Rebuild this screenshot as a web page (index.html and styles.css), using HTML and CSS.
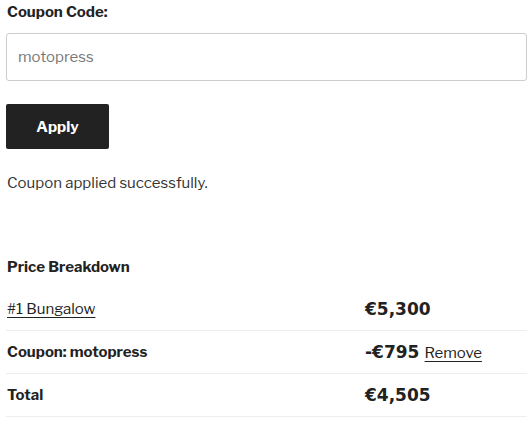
FILE: index.html
```html
<!DOCTYPE html>
<html>
<head>
<meta charset="utf-8">
<link rel="stylesheet" href="styles.css">
</head>
<body>
<div class="page">
  <label class="field-label" for="coupon">Coupon Code:</label>
  <input id="coupon" class="coupon-input" type="text" value="motopress">
  <button class="apply-btn" type="button">Apply</button>
  <p class="message">Coupon applied successfully.</p>
  <h3 class="breakdown-title">Price Breakdown</h3>
  <div class="breakdown">
    <div class="row">
      <div class="cell-label"><a href="#" class="link">#1 Bungalow</a></div>
      <div class="cell-price"><span class="price">€5,300</span></div>
    </div>
    <div class="row">
      <div class="cell-label"><strong>Coupon: motopress</strong></div>
      <div class="cell-price"><span class="price">-€795</span> <a href="#" class="link remove">Remove</a></div>
    </div>
    <div class="row">
      <div class="cell-label"><strong>Total</strong></div>
      <div class="cell-price"><span class="price">€4,505</span></div>
    </div>
  </div>
</div>
</body>
</html>
```

FILE: styles.css
```css
html, body {
  margin: 0;
  padding: 0;
  background: #fff;
}
body {
  font-family: "Libre Franklin", "Inter", "Liberation Sans", sans-serif;
  color: #222;
  font-size: 15px;
}
.page {
  width: 521px;
  margin-left: 6px;
  display: flex;
  flex-direction: column;
  align-items: flex-start;
}
.field-label {
  display: block;
  font-weight: 700;
  font-size: 15px;
  line-height: 24px;
  margin: 0 0 9px 1px;
}
.coupon-input {
  box-sizing: border-box;
  width: 521px;
  height: 48px;
  border: 1px solid #ccc;
  border-radius: 3px;
  padding: 0 11px;
  font-family: inherit;
  font-size: 15px;
  color: #777;
  background: #fff;
  outline: none;
}
.apply-btn {
  margin-top: 23px;
  width: 103px;
  height: 45px;
  border: 0;
  border-radius: 2px;
  background: #222;
  color: #fff;
  font-family: inherit;
  font-weight: 700;
  font-size: 15px;
  padding: 0;
}
.message {
  margin: 22px 0 0 1px;
  font-size: 15px;
  line-height: 24px;
  color: #333;
}
.breakdown-title {
  margin: 60px 0 0 1px;
  font-size: 15px;
  font-weight: 700;
  line-height: 24px;
}
.breakdown {
  width: 521px;
  margin-top: 9px;
}
.row {
  display: grid;
  grid-template-columns: 1fr 162px;
  align-items: center;
  height: 42px;
  border-bottom: 1px solid #eee;
  line-height: 24px;
}
.cell-label {
  padding-left: 1px;
}
.cell-label strong {
  font-weight: 700;
}
.link {
  color: #222;
  text-decoration: underline;
  text-underline-offset: 3px;
}
.price {
  font-family: "DejaVu Sans", "Verdana", sans-serif;
  font-weight: 700;
  font-size: 17px;
  color: #222;
}
.remove {
  margin-left: 2px;
  font-size: 15px;
}
```
